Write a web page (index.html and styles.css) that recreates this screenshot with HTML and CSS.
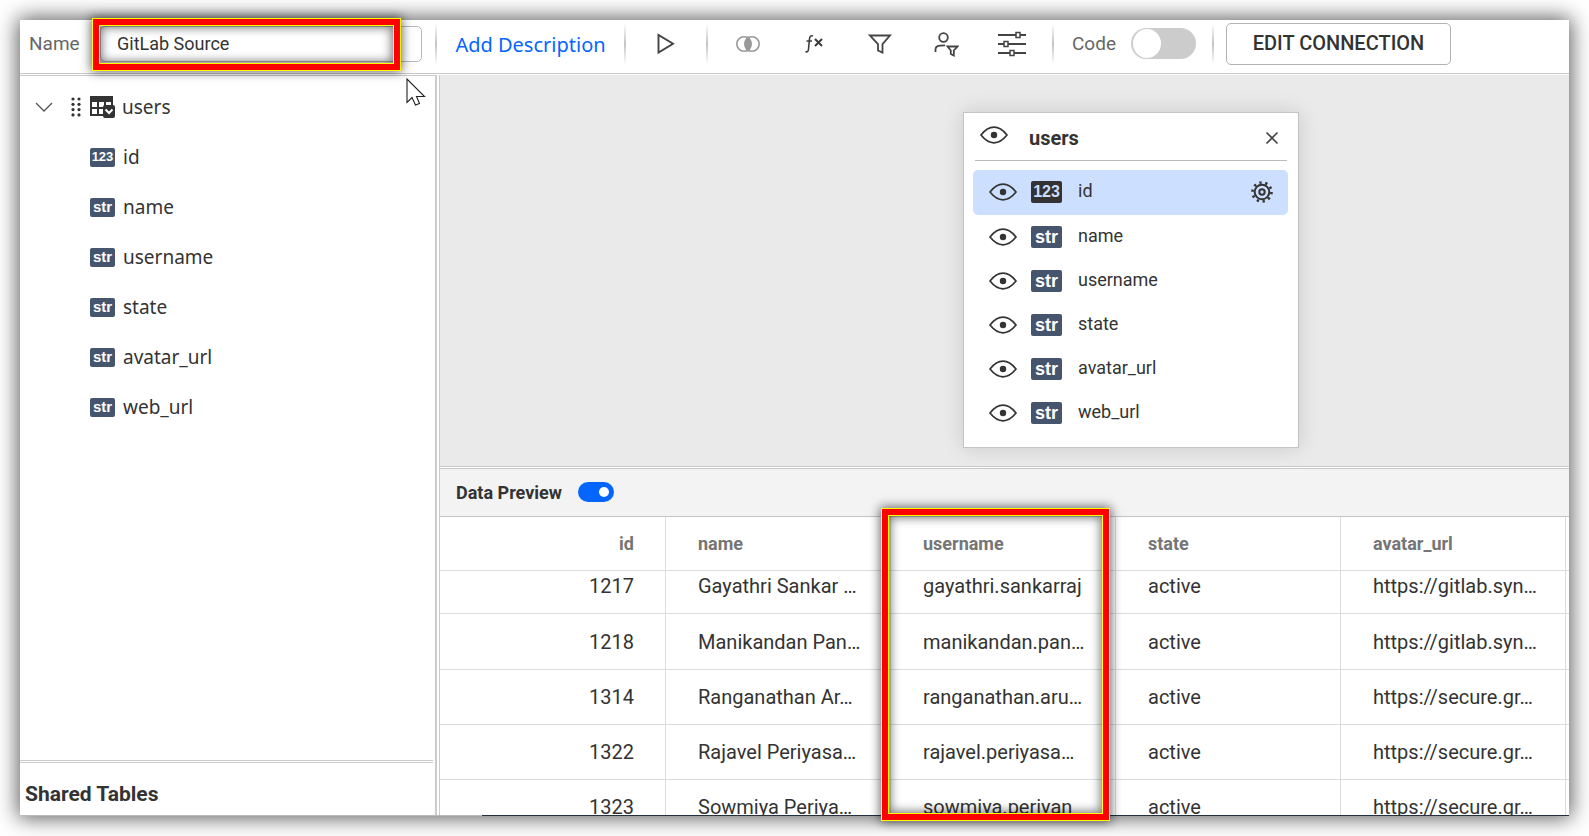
FILE: index.html
```html
<!DOCTYPE html>
<html lang="en">
<head>
<meta charset="utf-8">
<title>GitLab Source</title>
<link rel="stylesheet" href="styles.css">
</head>
<body>
<svg class="sprite" aria-hidden="true">
  <symbol id="eye" viewBox="0 0 28 18">
    <path d="M1 9C5 4 9 1.200 14 1.200S23 4 27 9c-4 5-8 7.800-13 7.800S5 14 1 9Z" fill="none" stroke="currentColor" stroke-width="1.700"/>
    <circle cx="14" cy="9" r="3.200" fill="currentColor"/>
  </symbol>
</svg>
<div class="window">
  <header class="toolbar">
    <label class="name-label" for="source-name">Name</label>
    <input class="name-input" id="source-name" type="text" value="GitLab Source">
    <span class="divider"></span>
    <a class="add-description" href="#">Add Description</a>
    <span class="divider"></span>
    <button class="tool tool-run" aria-label="Run">
      <svg width="20" height="22" viewBox="0 0 20 22"><path d="M2.500 2v17.500L17 10.700Z" fill="none" stroke="#444" stroke-width="1.900"/></svg>
    </button>
    <span class="divider"></span>
    <div class="tools">
      <button class="tool" aria-label="Join">
        <svg width="26" height="18" viewBox="0 0 26 18"><path d="M13 2.500c3 3 3 10 0 13-3-3-3-10 0-13Z" fill="#999" stroke="#999" stroke-width="2"/><circle cx="9" cy="9" r="7.200" fill="none" stroke="#999" stroke-width="1.600"/><circle cx="17" cy="9" r="7.200" fill="none" stroke="#999" stroke-width="1.600"/></svg>
      </button>
      <button class="tool" aria-label="Expression">
        <svg width="20" height="20" viewBox="0 0 20 20" fill="none" stroke="#3c3c3c"><path d="M9 2C6.500 1.300 5.800 2.500 5.500 5L4.500 15c-.2 2.500-1 3.200-3 2.800M2.500 7H8" stroke-width="1.600"/><path d="M11 5l7 7M18 5l-7 7" stroke-width="2"/></svg>
      </button>
      <button class="tool" aria-label="Filter">
        <svg width="24" height="22" viewBox="0 0 24 22"><path d="M2 2.500h20l-7.500 8.700v8.300l-4.500-2v-6.300Z" fill="none" stroke="#444" stroke-width="1.800"/></svg>
      </button>
      <button class="tool" aria-label="User filter">
        <svg width="26" height="26" viewBox="0 0 26 26" fill="none" stroke="#444" stroke-width="1.800"><circle cx="10.500" cy="6.500" r="4.300"/><path d="M2.500 21v-2.500C2.500 15 5 14.500 12 14.300M14.500 15.500h10L20.800 19.500v5L17.800 23v-3.500Z"/></svg>
      </button>
      <button class="tool" aria-label="Settings">
        <svg width="30" height="26" viewBox="0 0 30 26" fill="#fff" stroke="#444" stroke-width="1.500"><path d="M1 4h28M1 13h28M1 22h28" stroke-width="1.800"/><rect x="19" y="1.500" width="4" height="5"/><rect x="7" y="10.500" width="4" height="5"/><rect x="13" y="19.500" width="4" height="5"/></svg>
      </button>
    </div>
    <span class="divider"></span>
    <label class="code-toggle">Code <input class="switch switch-large" type="checkbox"></label>
    <span class="divider"></span>
    <button class="edit-connection">EDIT CONNECTION</button>
  </header>

  <div class="workspace">
    <aside class="sidebar">
      <div class="tree">
        <div class="tree-root">
          <button class="icon-button chevron" aria-label="Collapse users">
            <svg width="18" height="11" viewBox="0 0 18 11"><path d="M1 1l8 8 8-8" fill="none" stroke="#555" stroke-width="1.300"/></svg>
          </button>
          <svg class="grip" width="10" height="20" viewBox="0 0 10 20" fill="#333"><circle cx="2" cy="2" r="1.600"/><circle cx="8" cy="2" r="1.600"/><circle cx="2" cy="7.300" r="1.600"/><circle cx="8" cy="7.300" r="1.600"/><circle cx="2" cy="12.600" r="1.600"/><circle cx="8" cy="12.600" r="1.600"/><circle cx="2" cy="17.900" r="1.600"/><circle cx="8" cy="17.900" r="1.600"/></svg>
          <svg class="table-icon" width="25" height="22" viewBox="0 0 25 22"><path d="M0 0h23v20H0Z" fill="#333"/><path d="M2 6h5v5H2ZM9 6h5v5H9ZM16 6h5v5h-5ZM2 13h5v5H2ZM9 13h5v5H9Z" fill="#fff"/><rect x="13" y="9" width="12" height="13" rx="2" fill="#333"/><path d="M15.500 13.500l3.500 3.500 3.500-3.500" fill="none" stroke="#fff" stroke-width="2"/></svg>
          <span>users</span>
        </div>
        <ul class="fields">
          <li><span class="badge badge-number">123</span>id</li>
          <li><span class="badge">str</span>name</li>
          <li><span class="badge">str</span>username</li>
          <li><span class="badge">str</span>state</li>
          <li><span class="badge">str</span>avatar_url</li>
          <li><span class="badge">str</span>web_url</li>
        </ul>
      </div>
      <h2 class="shared">Shared Tables</h2>
    </aside>

    <main class="main">
      <section class="canvas">
        <div class="card">
          <div class="card-header">
            <button class="icon-button" aria-label="Show all columns"><svg class="card-eye" width="28" height="18"><use href="#eye"/></svg></button>
            <h3 class="card-title">users</h3>
            <button class="icon-button" aria-label="Remove table"><svg width="14" height="14" viewBox="0 0 14 14"><path d="M1.500 1.500l11 11M12.500 1.500l-11 11" stroke="#444" stroke-width="1.600"/></svg></button>
          </div>
          <ul class="card-fields">
            <li class="selected">
              <button class="icon-button" aria-label="Toggle id"><svg width="28" height="18"><use href="#eye"/></svg></button>
              <span class="badge badge-large badge-dark">123</span><span class="field-name">id</span>
              <button class="icon-button" aria-label="Column settings"><svg width="22" height="22" viewBox="0 0 22 22" fill="none" stroke="#333"><circle cx="11" cy="11" r="7.300" stroke-width="2"/><circle cx="11" cy="11" r="2.700" stroke-width="2"/><circle cx="11" cy="11" r="9.500" stroke-width="2.600" stroke-dasharray="2.300 3.670"/></svg></button>
            </li>
            <li><button class="icon-button" aria-label="Toggle name"><svg width="28" height="18"><use href="#eye"/></svg></button><span class="badge badge-large">str</span><span class="field-name">name</span></li>
            <li><button class="icon-button" aria-label="Toggle username"><svg width="28" height="18"><use href="#eye"/></svg></button><span class="badge badge-large">str</span><span class="field-name">username</span></li>
            <li><button class="icon-button" aria-label="Toggle state"><svg width="28" height="18"><use href="#eye"/></svg></button><span class="badge badge-large">str</span><span class="field-name">state</span></li>
            <li><button class="icon-button" aria-label="Toggle avatar_url"><svg width="28" height="18"><use href="#eye"/></svg></button><span class="badge badge-large">str</span><span class="field-name">avatar_url</span></li>
            <li><button class="icon-button" aria-label="Toggle web_url"><svg width="28" height="18"><use href="#eye"/></svg></button><span class="badge badge-large">str</span><span class="field-name">web_url</span></li>
          </ul>
        </div>
      </section>
      <section class="preview">
        <div class="preview-bar">
          <label class="preview-toggle">Data Preview <input class="switch switch-blue" type="checkbox" checked></label>
        </div>
        <div class="grid">
          <table>
            <colgroup><col class="first-col"><col class="data-col"><col class="data-col"><col class="data-col"><col class="data-col"><col></colgroup>
            <thead>
              <tr><th>id</th><th>name</th><th>username</th><th>state</th><th>avatar_url</th><th class="rest"></th></tr>
            </thead>
            <tbody>
              <tr><td>1217</td><td>Gayathri Sankar …</td><td>gayathri.sankarraj</td><td>active</td><td>https://gitlab.syn…</td><td class="rest"></td></tr>
              <tr><td>1218</td><td>Manikandan Pan…</td><td>manikandan.pan…</td><td>active</td><td>https://gitlab.syn…</td><td class="rest"></td></tr>
              <tr><td>1314</td><td>Ranganathan Ar…</td><td>ranganathan.aru…</td><td>active</td><td>https://secure.gr…</td><td class="rest"></td></tr>
              <tr><td>1322</td><td>Rajavel Periyasa…</td><td>rajavel.periyasa…</td><td>active</td><td>https://secure.gr…</td><td class="rest"></td></tr>
              <tr><td>1323</td><td>Sowmiya Periya…</td><td>sowmiya.periyan</td><td>active</td><td>https://secure.gr…</td><td class="rest"></td></tr>
            </tbody>
          </table>
        </div>
      </section>
    </main>
  </div>
  <div class="bottom-edge"></div>
  <div class="highlight highlight-name"></div>
  <div class="highlight highlight-column"></div>
  <svg class="cursor" width="20" height="29" viewBox="0 0 20 29"><path d="M1 1v23.500l5-5 3.500 7.500 4-1.500-3-7h8Z" fill="#fff" stroke="#222" stroke-width="1.100"/></svg>
</div>
</body>
</html>
```
FILE: styles.css
```css
* { box-sizing: border-box; }

body {
  margin: 0;
  padding: 20px;
  min-height: 100vh;
  background: #fff;
  color: #333;
  font-family: Roboto, sans-serif;
  font-size: 20px;
}

button, input { font: inherit; color: inherit; margin: 0; }
button { cursor: pointer; }
ul { list-style: none; margin: 0; padding: 0; }
.sprite { display: none; }
svg { display: block; }

.window {
  position: relative;
  display: flex;
  flex-direction: column;
  height: calc(100vh - 40px);
  background: #fff;
  box-shadow: 0 0 20px 2px rgba(0, 0, 0, 0.65);
}

/* Toolbar */
.toolbar {
  display: flex;
  align-items: center;
  height: 54px;
  padding: 0 10px 6px 9px;
  border-bottom: 1px solid #c8c8c8;
  flex: none;
}
.name-label { width: 71px; color: #666; }
.name-input {
  flex: 0 1 322px;
  min-width: 0;
  height: 36px;
  margin-right: 13px;
  padding: 0 16px;
  border: 1px solid #b8b8b8;
  border-radius: 5px;
  background: #fff;
  font-size: 18px;
}
.divider {
  width: 2px;
  height: 42px;
  flex: none;
  background: linear-gradient(#fff, #c4c4c4 50%, #fff);
}
.add-description {
  min-width: 187px;
  padding: 2px 16px 0;
  color: #0565ff;
  font-family: "Noto Sans", sans-serif;
  text-align: center;
  text-decoration: none;
  white-space: nowrap;
}
.tools { display: flex; padding: 0 7px; }
.tool {
  display: flex;
  justify-content: center;
  align-items: center;
  width: 66px;
  height: 40px;
  padding: 0;
  border: 0;
  background: none;
}
.tool-run { width: 80px; }
.code-toggle {
  display: flex;
  align-items: center;
  gap: 15px;
  padding: 0 16px 0 18px;
  color: #666;
}
.name-label, .code-toggle { font-size: 19px; }
.edit-connection {
  height: 42px;
  min-width: 225px;
  margin-left: 12px;
  padding: 0 24px 2px;
  border: 1px solid #b3b3b3;
  border-radius: 5px;
  background: #fff;
  font-weight: 500;
  white-space: nowrap;
}

.switch {
  appearance: none;
  position: relative;
  flex: none;
  width: 36px;
  height: 20px;
  border-radius: 16px;
  background: #ccc;
}
.switch::before {
  content: "";
  position: absolute;
  border-radius: 50%;
  background: #fff;
}
.switch-large { width: 65px; height: 31px; }
.switch-large::before { left: 2px; top: 1px; width: 28px; height: 29px; }
.switch-blue { background: #0565ff; }
.switch-blue::before { right: 5px; top: 5px; width: 10px; height: 10px; }

/* Workspace */
.workspace {
  flex: 1;
  min-height: 0;
  display: grid;
  grid-template-columns: 417px minmax(0, 1fr);
  grid-template-rows: minmax(0, 1fr);
  column-gap: 2px;
  padding-top: 1px;
}
.sidebar {
  display: flex;
  flex-direction: column;
  border-top: 1px solid #ccc;
  border-right: 2px solid #ccc;
}
.tree {
  flex: 1;
  padding-top: 6px;
  font-family: "Noto Sans", sans-serif;
  font-size: 19px;
}
.tree-root, .fields li {
  display: flex;
  align-items: center;
  height: 50px;
}
.tree-root { padding-left: 15px; }
.grip { margin: 0 9px 0 18px; }
.table-icon { margin-right: 7px; }
.fields li { gap: 8px; padding-left: 70px; }
.icon-button { padding: 0; border: 0; background: none; flex: none; }

.badge {
  display: flex;
  justify-content: center;
  align-items: center;
  flex: none;
  width: 25px;
  height: 19px;
  border-radius: 2px;
  background: #46556e;
  color: #fff;
  font: bold 15px/18px "Liberation Sans", sans-serif;
}
.badge-number { font-size: 13px; }
.badge-large { width: 31px; height: 22px; font-size: 18px; line-height: 22px; }
.badge-dark { background: #333; color: #cddffe; font-size: 16px; }

.shared {
  margin: 0 2px 0 0;
  padding: 19px 5px 9px;
  border-top: 3px double #ccc;
  font-size: 21px;
  line-height: 24px;
  font-weight: 700;
}

/* Canvas */
.main {
  display: flex;
  flex-direction: column;
  min-height: 0;
  border-left: 1px solid #ccc;
}
.canvas {
  position: relative;
  height: 391px;
  flex: none;
  background: #eaeaea;
}
.card {
  position: absolute;
  left: 523px;
  top: 37px;
  width: 336px;
  padding: 0 10px 12px 9px;
  border: 1px solid #c4c4c4;
  background: #fff;
  box-shadow: 0 0 20px rgba(0, 0, 0, 0.14);
}
.card-header {
  display: flex;
  align-items: center;
  height: 48px;
  margin: 0 1px 9px 2px;
  padding: 2px 8px 0 5px;
  border-bottom: 1px solid #bbb;
}
.card-eye { margin-bottom: 6px; }
.card-title { flex: 1; margin: 0 0 0 21px; font-size: 20px; font-weight: 700; }
.card-fields li {
  display: flex;
  align-items: center;
  height: 44px;
  padding: 0 15px 0 16px;
  font-size: 18px;
}
.card-fields .selected { height: 45px; padding-bottom: 2px; border-radius: 5px; background: #cddffe; }
.card-fields .badge { margin: 0 16px 0 14px; }
.field-name { flex: 1; padding-bottom: 3px; }

/* Data preview */
.preview {
  flex: 1;
  min-height: 0;
  display: flex;
  flex-direction: column;
  border-top: 3px double #c8c8c8;
}
.preview-bar {
  display: flex;
  align-items: center;
  height: 48px;
  flex: none;
  padding: 0 16px 1px;
  border-bottom: 1px solid #c4c4c4;
  background: #f3f3f3;
}
.preview-toggle {
  display: flex;
  align-items: center;
  gap: 16px;
  font-size: 18px;
  font-weight: 700;
}
.grid { flex: 1; min-height: 0; overflow: hidden; }
.grid table {
  width: 100%;
  table-layout: fixed;
  border-collapse: separate;
  border-spacing: 0;
}
.first-col { width: 226px; }
.data-col { width: 225px; }
.grid th, .grid td {
  border-right: 1px solid #dcdcdc;
  border-bottom: 1px solid #dcdcdc;
  text-align: left;
  white-space: nowrap;
}
.grid th {
  height: 54px;
  padding: 0 32px;
  color: #757575;
  font-size: 18px;
  font-weight: 700;
}
.grid td {
  height: 56px;
  padding: 0 32px 15px;
  vertical-align: bottom;
  line-height: 24px;
}
.grid tbody tr:first-child td { height: 43px; }
.grid tbody tr:nth-child(n+3) td { height: 55px; }
.grid th:first-child, .grid td:first-child { padding-right: 31px; text-align: right; }
.grid .rest { padding: 0; border-right: 0; }

.bottom-edge {
  height: 1px;
  flex: none;
  background: linear-gradient(to right, #bbb 462px, #22303f 462px);
}

/* Callout frames */
.highlight {
  position: absolute;
  border: 6px solid #f00;
  outline: 1px solid #ff0;
  box-shadow: 0 0 10px 2px rgba(0, 0, 0, 0.6), inset 0 0 0 1px #ff0, inset 0 0 10px 3px rgba(0, 0, 0, 0.5);
  pointer-events: none;
}
.highlight-name { left: 73px; top: -1px; width: 307px; height: 51px; }
.highlight-column { left: 862px; top: 489px; width: 227px; height: 311px; }
.cursor { position: absolute; left: 386px; top: 58px; }
```
